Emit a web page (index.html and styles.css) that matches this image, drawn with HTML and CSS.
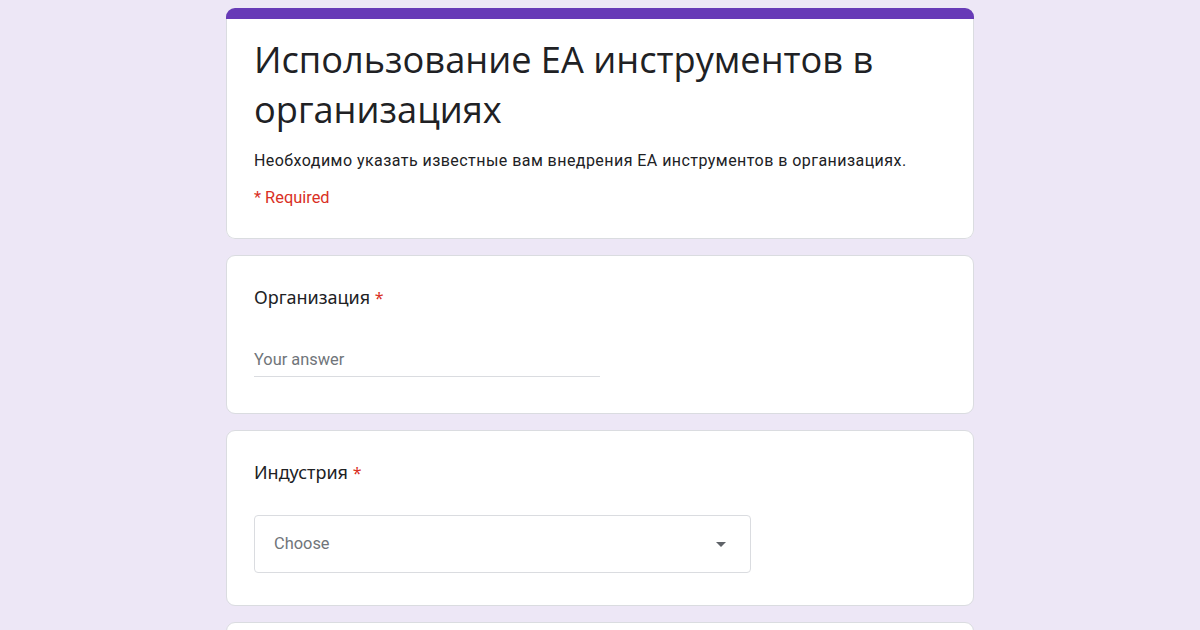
FILE: index.html
```html
<!DOCTYPE html>
<html lang="ru">
<head>
<meta charset="utf-8">
<title>Использование ЕА инструментов в организациях</title>
<link rel="stylesheet" href="styles.css">
</head>
<body>
<main class="form">
  <section class="card header-card">
    <div class="band"></div>
    <div class="header-body">
      <h1 class="form-title">Использование ЕА инструментов в организациях</h1>
      <p class="form-desc">Необходимо указать известные вам внедрения ЕА инструментов в организациях.</p>
      <p class="required-note">* Required</p>
    </div>
  </section>

  <section class="card question q-text">
    <div class="q-title">Организация <span class="star">*</span></div>
    <div class="text-input">
      <span class="placeholder">Your answer</span>
    </div>
  </section>

  <section class="card question q-select">
    <div class="q-title">Индустрия <span class="star">*</span></div>
    <div class="select">
      <span class="placeholder">Choose</span>
      <svg class="arrow" width="10" height="5" viewBox="0 0 10 5"><path d="M0 0 L10 0 L5 5 Z" fill="#5f6368"/></svg>
    </div>
  </section>

  <section class="card question stub"></section>
</main>
</body>
</html>
```

FILE: styles.css
```css
html, body {
  margin: 0;
  padding: 0;
  background: #ede7f6;
}
body {
  font-family: Roboto, "Noto Sans", Arial, sans-serif;
  color: #202124;
  overflow: hidden;
  height: 630px;
}
.form {
  width: 748px;
  margin: 0 auto;
  padding-top: 8px;
  display: flex;
  flex-direction: column;
  gap: 16px;
}
.card {
  background: #fff;
  border: 1px solid #dadce0;
  border-radius: 9px;
  box-sizing: border-box;
}
.header-card {
  overflow: hidden;
  border: none;
  height: 231px;
  box-shadow: 0 0 0 1px #dadce0 inset;
}
.band {
  height: 11px;
  background: #673ab7;
}
.header-body {
  padding: 15px 28px 0 28px;
}
.form-title {
  margin: 0;
  font-family: "Open Sans", "Noto Sans", sans-serif;
  font-weight: 400;
  font-size: 36.2px;
  line-height: 50px;
  color: #202124;
  max-width: 660px;
}
.form-desc {
  margin: 16px 0 0 0;
  font-size: 16px;
  line-height: 22px;
  color: #202124;
  letter-spacing: 0.45px;
}
.required-note {
  margin: 15px 0 0 0;
  font-size: 16.4px;
  line-height: 22px;
  color: #d93025;
}
.question {
  padding: 27px 27px 0 27px;
}
.q-text {
  height: 159px;
}
.q-select {
  height: 176px;
}
.q-title {
  font-family: "Noto Sans", "Open Sans", sans-serif;
  font-size: 18px;
  line-height: 28px;
  color: #202124;
}
.star {
  color: #d93025;
  font-size: 16px;
}
.text-input {
  margin-top: 37px;
  width: 346px;
  border-bottom: 1px solid #dadce0;
  padding-bottom: 5px;
}
.placeholder {
  font-size: 16.4px;
  line-height: 22px;
  color: #70757a;
}
.select {
  margin-top: 28px;
  width: 497px;
  height: 58px;
  box-sizing: border-box;
  border: 1px solid #dadce0;
  border-radius: 4px;
  display: flex;
  align-items: center;
  justify-content: space-between;
  padding: 0 24px 0 19px;
}
.arrow {
  display: block;
}
.stub {
  height: 40px;
}
```
